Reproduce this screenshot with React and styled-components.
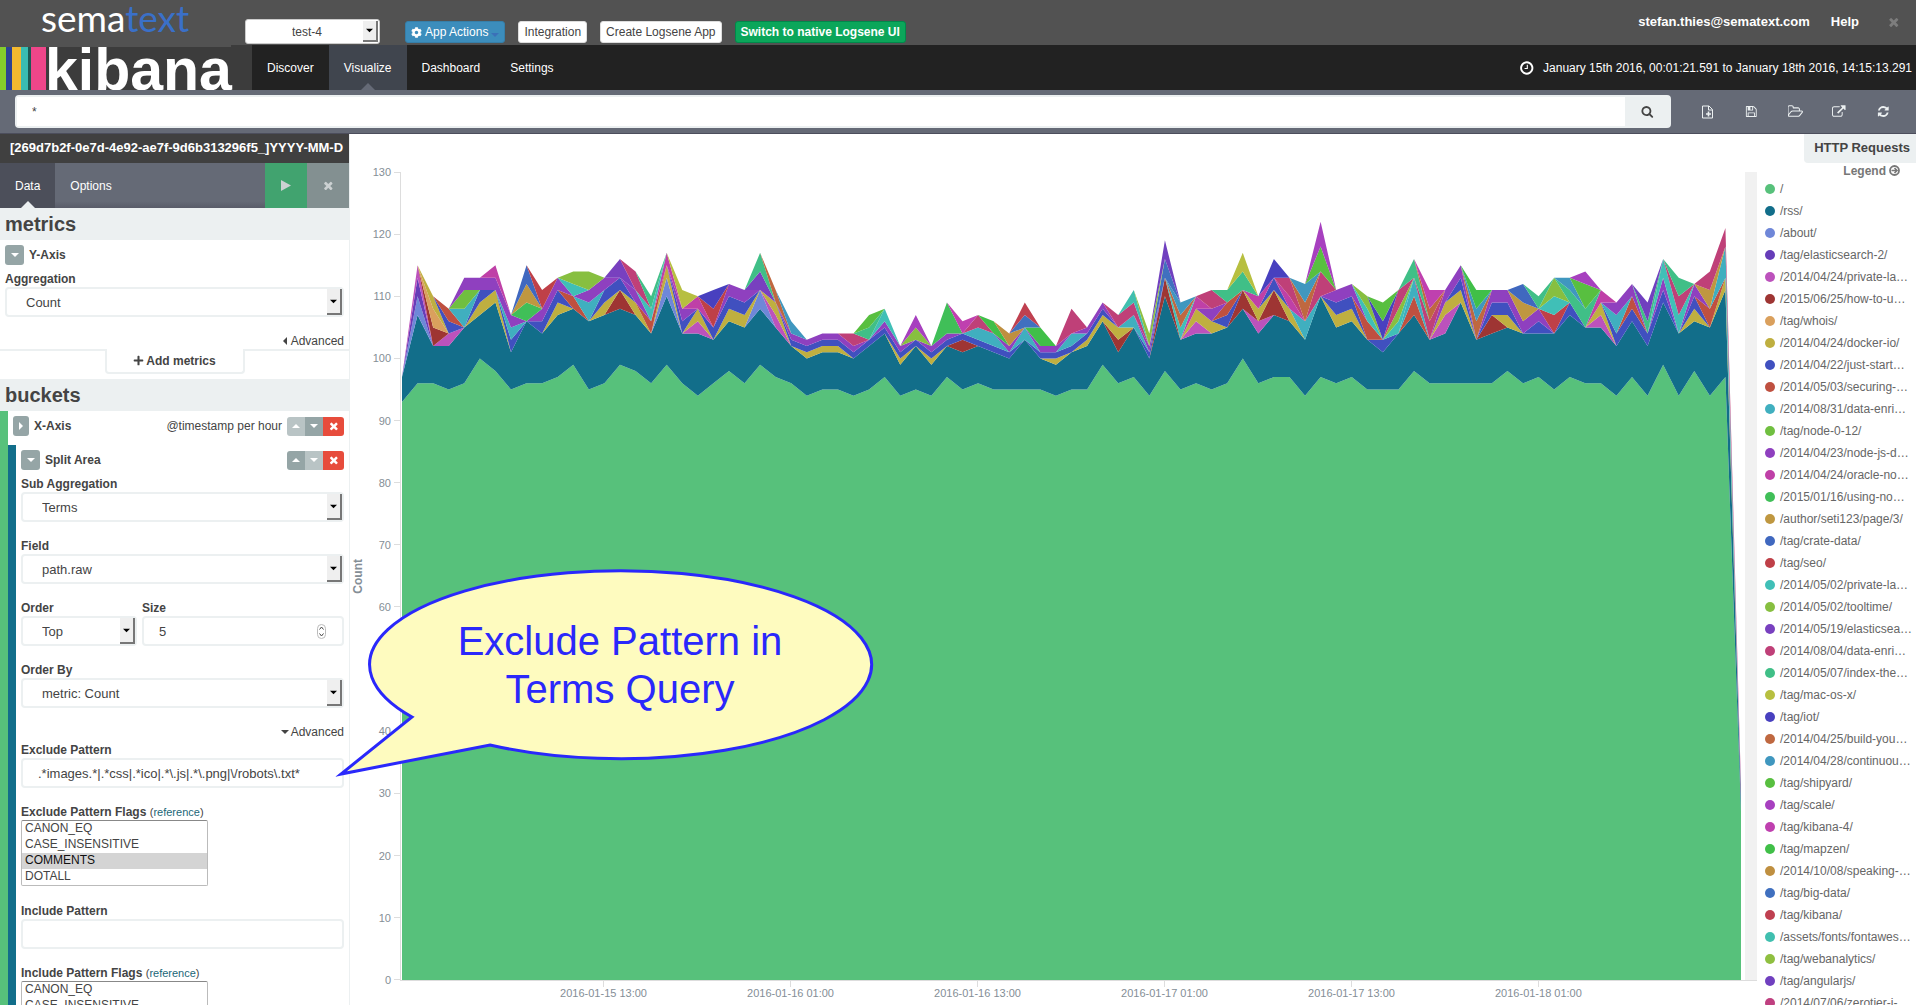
import { useState } from "react";
import styled, { createGlobalStyle } from "styled-components";
import { FaCog, FaPlus } from "react-icons/fa";

const series = [
  ["/", "#57c17b"],
  ["/rss/", "#126e8a"],
  ["/about/", "#6f87d8"],
  ["/tag/elasticsearch-2/", "#663db8"],
  ["/2014/04/24/private-la…", "#bc52bc"],
  ["/2015/06/25/how-to-u…", "#9e3533"],
  ["/tag/whois/", "#daa05d"],
  ["/2014/04/24/docker-io/", "#bfaf40"],
  ["/2014/04/22/just-start…", "#4050bf"],
  ["/2014/05/03/securing-…", "#bf5040"],
  ["/2014/08/31/data-enri…", "#40afbf"],
  ["/tag/node-0-12/", "#70bf40"],
  ["/2014/04/23/node-js-d…", "#8f40bf"],
  ["/2014/04/24/oracle-no…", "#bf40a7"],
  ["/2015/01/16/using-no…", "#40bf58"],
  ["/author/seti123/page/3/", "#bf9740"],
  ["/tag/crate-data/", "#4068bf"],
  ["/tag/seo/", "#bf4048"],
  ["/2014/05/02/private-la…", "#40bfb7"],
  ["/2014/05/02/tooltime/", "#87bf40"],
  ["/2014/05/19/elasticsea…", "#7840bf"],
  ["/2014/08/04/data-enri…", "#bf4078"],
  ["/2014/05/07/index-the…", "#40bf87"],
  ["/tag/mac-os-x/", "#b7bf40"],
  ["/tag/iot/", "#4840bf"],
  ["/2014/04/25/build-you…", "#bf6840"],
  ["/2014/04/28/continuou…", "#4097bf"],
  ["/tag/shipyard/", "#58bf40"],
  ["/tag/scale/", "#a740bf"],
  ["/tag/kibana-4/", "#bf40af"],
  ["/tag/mapzen/", "#40bf48"],
  ["/2014/10/08/speaking-…", "#bf8f40"],
  ["/tag/big-data/", "#4070bf"],
  ["/tag/kibana/", "#bf4050"],
  ["/assets/fonts/fontawes…", "#40bfaf"],
  ["/tag/webanalytics/", "#8fbf40"],
  ["/tag/angularjs/", "#7040bf"],
  ["/2014/07/06/zerotier-i-…", "#bf4080"],
];

// one entry per hour: series index -> number of requests
const hours = [
  { 0: 93, 1: 4 },
  { 0: 96, 1: 11, 2: 3, 3: 3, 4: 2 },
  { 0: 96, 1: 6, 5: 3, 6: 3, 7: 2 },
  { 0: 95, 1: 7, 4: 2, 8: 2, 9: 2 },
  { 0: 96, 1: 9, 10: 3, 11: 3, 12: 2 },
  { 0: 100, 1: 7, 7: 2, 8: 2, 12: 2 },
  { 0: 98, 1: 11, 7: 2, 12: 2, 13: 2 },
  { 0: 95, 1: 6, 8: 2, 10: 2, 12: 2 },
  { 0: 96, 1: 10, 14: 3, 15: 3, 16: 3 },
  { 0: 96, 1: 8, 8: 2, 12: 2, 17: 3 },
  { 0: 97, 1: 10, 7: 2, 8: 2, 12: 2 },
  { 0: 99, 1: 9, 9: 2, 18: 2, 19: 2 },
  { 0: 95, 1: 11, 10: 3, 12: 2, 19: 3 },
  { 0: 96, 1: 11, 7: 2, 8: 2, 12: 2 },
  { 0: 99, 1: 9, 5: 3, 8: 2, 20: 3 },
  { 0: 98, 1: 9, 7: 2, 12: 2, 21: 3 },
  { 0: 96, 1: 8, 9: 2, 18: 2, 22: 2 },
  { 0: 99, 1: 11, 2: 3, 7: 2, 13: 2 },
  { 0: 96, 1: 8, 8: 2, 12: 2, 23: 3 },
  { 0: 94, 1: 10, 4: 2, 7: 2, 13: 2 },
  { 0: 96, 1: 7, 8: 2, 17: 3, 24: 3 },
  { 0: 98, 1: 8, 7: 2, 8: 2, 12: 2 },
  { 0: 96, 1: 9, 7: 2, 8: 2, 12: 2 },
  { 0: 99, 1: 9, 2: 3, 20: 3, 22: 3 },
  { 0: 97, 1: 8, 4: 2, 7: 2, 25: 2 },
  { 0: 96, 1: 6, 8: 1, 12: 1, 26: 2 },
  { 0: 94, 1: 6, 7: 1, 8: 1, 12: 1 },
  { 0: 95, 1: 6, 7: 1, 8: 1, 12: 1 },
  { 0: 95, 1: 6, 7: 1, 8: 1, 12: 1 },
  { 0: 94, 1: 6, 8: 1, 12: 1, 21: 2 },
  { 0: 95, 1: 7, 8: 1, 22: 2, 27: 2 },
  { 0: 97, 1: 7, 8: 1, 12: 1, 18: 2 },
  { 0: 94, 1: 5, 7: 1, 8: 1, 12: 1 },
  { 0: 95, 1: 7, 8: 1, 19: 2, 28: 2 },
  { 0: 94, 1: 5, 7: 1, 8: 1, 12: 1 },
  { 0: 97, 1: 5, 8: 1, 12: 1, 14: 5 },
  { 0: 95, 1: 6, 5: 2, 8: 1, 29: 2 },
  { 0: 96, 1: 6, 8: 1, 10: 2, 21: 2 },
  { 0: 95, 1: 6, 8: 1, 10: 2, 30: 2 },
  { 0: 95, 1: 5, 8: 1, 12: 1, 31: 2 },
  { 0: 95, 1: 8, 10: 2, 32: 2, 33: 2 },
  { 0: 95, 1: 5, 8: 1, 12: 1, 30: 3 },
  { 0: 94, 1: 5, 7: 1, 8: 1, 12: 1 },
  { 0: 95, 1: 6, 8: 1, 10: 2, 21: 4 },
  { 0: 95, 1: 7, 7: 1, 8: 1, 12: 1 },
  { 0: 99, 1: 7, 7: 1, 8: 1, 12: 1 },
  { 0: 96, 1: 5, 5: 2, 7: 2, 21: 2 },
  { 0: 97, 1: 8, 10: 2, 21: 2, 34: 2 },
  { 0: 94, 1: 6, 8: 1, 12: 1, 35: 2 },
  { 0: 98, 1: 12, 5: 3, 32: 3, 36: 3 },
  { 0: 95, 1: 8, 18: 2, 25: 2, 26: 2 },
  { 0: 96, 1: 8, 4: 2, 7: 2, 13: 2 },
  { 0: 95, 1: 9, 7: 2, 12: 2, 21: 3 },
  { 0: 96, 1: 9, 8: 2, 9: 2, 22: 2 },
  { 0: 100, 1: 8, 5: 3, 22: 3, 23: 3 },
  { 0: 96, 1: 8, 4: 2, 7: 2, 13: 2 },
  { 0: 97, 1: 10, 5: 4, 8: 2, 24: 3 },
  { 0: 97, 1: 9, 7: 2, 13: 2, 21: 3 },
  { 0: 94, 1: 9, 10: 3, 25: 3, 26: 3 },
  { 0: 97, 1: 13, 21: 4, 27: 4, 28: 4 },
  { 0: 96, 1: 9, 7: 2, 8: 2, 12: 2 },
  { 0: 97, 1: 9, 7: 2, 8: 2, 12: 2 },
  { 0: 95, 1: 8, 9: 3, 18: 2, 19: 2 },
  { 0: 95, 1: 6, 8: 2, 24: 3, 27: 3 },
  { 0: 95, 1: 9, 18: 2, 19: 2, 21: 3 },
  { 0: 98, 1: 9, 9: 3, 10: 3, 22: 3 },
  { 0: 96, 1: 7, 21: 3, 25: 2, 29: 3 },
  { 0: 96, 1: 8, 4: 3, 7: 2, 12: 2 },
  { 0: 96, 1: 13, 7: 2, 8: 2, 12: 2 },
  { 0: 96, 1: 7, 25: 3, 26: 2, 30: 3 },
  { 0: 96, 1: 8, 5: 3, 8: 2, 12: 2 },
  { 0: 98, 1: 7, 7: 2, 8: 2, 12: 2 },
  { 0: 96, 1: 8, 12: 2, 15: 3, 16: 3 },
  { 0: 97, 1: 7, 8: 2, 12: 2, 22: 2 },
  { 0: 95, 1: 9, 17: 3, 18: 3, 19: 3 },
  { 0: 97, 1: 10, 8: 2, 22: 2, 26: 2 },
  { 0: 96, 1: 9, 22: 3, 27: 4, 28: 2 },
  { 0: 96, 1: 9, 4: 2, 7: 2, 13: 2 },
  { 0: 94, 1: 8, 8: 2, 10: 3, 12: 2 },
  { 0: 97, 1: 9, 8: 2, 9: 2, 12: 2 },
  { 0: 94, 1: 8, 8: 2, 22: 2, 36: 3 },
  { 0: 99, 1: 10, 8: 2, 12: 2, 18: 3 },
  { 0: 94, 1: 10, 18: 3, 21: 3, 22: 3 },
  { 0: 98, 1: 8, 7: 2, 8: 2, 12: 2 },
  { 0: 94, 1: 11, 9: 3, 15: 3, 21: 3 },
  { 0: 97, 1: 14, 7: 2, 10: 5, 21: 3 },
  { 0: 27, 1: 2, 12: 1, 21: 1 },
];

const MAX = 130;
const yTicks = Array.from({ length: 14 }, (_, i) => MAX - i * 10);
const xTicks = [
  "2016-01-15 13:00",
  "2016-01-16 01:00",
  "2016-01-16 13:00",
  "2016-01-17 01:00",
  "2016-01-17 13:00",
  "2016-01-18 01:00",
];
const flags = ["CANON_EQ", "CASE_INSENSITIVE", "COMMENTS", "DOTALL"];

const buildAreas = () => {
  const base = hours.map(() => 0);
  return series.map(([name, color], s) => {
    const lower = base.map((v, x) => `${x},${MAX - v}`);
    hours.forEach((hour, x) => {
      base[x] += hour[s] || 0;
    });
    const upper = base.map((v, x) => `${x},${MAX - v}`);
    return { name, color, points: [...upper, ...lower.reverse()].join(" ") };
  });
};

const areas = buildAreas();

const icons = {
  times:
    "M1490 1322q0 40-28 68l-136 136q-28 28-68 28t-68-28l-294-294-294 294q-28 28-68 28t-68-28l-136-136q-28-28-28-68t28-68l294-294-294-294q-28-28-28-68t28-68l136-136q28-28 68-28t68 28l294 294 294-294q28-28 68-28t68 28l136 136q28 28 28 68t-28 68l-294 294 294 294q28 28 28 68z",
  search:
    "M1216 832q0-185-131.500-316.500t-316.500-131.500-316.500 131.500-131.500 316.500 131.500 316.500 316.500 131.500 316.500-131.500 131.500-316.500zm512 832q0 52-38 90t-90 38q-54 0-90-38l-343-342q-179 124-399 124-143 0-273.500-55.500t-225-150-150-225-55.500-273.500 55.500-273.500 150-225 225-150 273.500-55.500 273.500 55.500 225 150 150 225 55.500 273.500q0 220-124 399l343 343q37 37 37 90z",
  clock:
    "M1024 544v448q0 14-9 23t-23 9h-320q-14 0-23-9t-9-23v-64q0-14 9-23t23-9h224v-352q0-14 9-23t23-9h64q14 0 23 9t9 23zm416 352q0-148-73-273t-198-198-273-73-273 73-198 198-73 273 73 273 198 198 273 73 273-73 198-198 73-273zm224 0q0 209-103 385.500t-279.500 279.500-385.500 103-385.500-103-279.500-279.500-103-385.500 103-385.500 279.500-279.500 385.500-103 385.500 103 279.500 279.500 103 385.500z",
  save: "M512 1536h768v-384h-768v384zm896 0h128v-896q0-14-10-38.500t-20-34.500l-281-281q-10-10-34-20t-39-10v416q0 40-28 68t-68 28h-576q-40 0-68-28t-28-68v-416h-128v1280h128v-416q0-40 28-68t68-28h832q40 0 68 28t28 68v416zm-384-928v-320q0-13-9.500-22.500t-22.500-9.500h-192q-13 0-22.500 9.500t-9.500 22.500v320q0 13 9.500 22.500t22.500 9.500h192q13 0 22.500-9.500t9.500-22.500zm640 32v928q0 40-28 68t-68 28h-1344q-40 0-68-28t-28-68v-1344q0-40 28-68t68-28h928q40 0 88 20t76 48l280 280q28 28 48 76t20 88z",
  open: "M1717 931q0-35-53-35h-1088q-40 0-85.500 21.500t-71.500 52.500l-294 363q-18 24-18 40 0 35 53 35h1088q40 0 86-22t71-53l294-363q18-22 18-39zm-1141-163h768v-160q0-40-28-68t-68-28h-576q-40 0-68-28t-28-68v-64q0-40-28-68t-68-28h-320q-40 0-68 28t-28 68v853l256-315q44-53 116-87.500t140-34.500zm1269 163q0 62-46 120l-295 363q-43 53-116 87.500t-140 34.500h-1088q-92 0-158-66t-66-158v-960q0-92 66-158t158-66h320q92 0 158 66t66 158v32h544q92 0 158 66t66 158v160h192q54 0 99 24.500t67 70.500q15 32 15 68z",
  share:
    "M1408 928v320q0 119-84.500 203.500t-203.500 84.500h-832q-119 0-203.500-84.500t-84.500-203.500v-832q0-119 84.500-203.500t203.500-84.500h704q14 0 23 9t9 23v64q0 14-9 23t-23 9h-704q-66 0-113 47t-47 113v832q0 66 47 113t113 47h832q66 0 113-47t47-113v-320q0-14 9-23t23-9h64q14 0 23 9t9 23zm384-864v512q0 26-19 45t-45 19-45-19l-176-176-652 652q-10 10-23 10t-23-10l-114-114q-10-10-10-23t10-23l652-652-176-176q-19-19-19-45t19-45 45-19h512q26 0 45 19t19 45z",
  refresh:
    "M1639 1056q0 5-1 7-64 268-268 434.500t-478 166.500q-146 0-282.500-55t-243.500-157l-129 129q-19 19-45 19t-45-19-19-45v-448q0-26 19-45t45-19h448q26 0 45 19t19 45-19 45l-137 137q71 66 161 102t187 36q134 0 250-65t186-179q11-17 53-117 8-23 30-23h192q13 0 22.500 9.500t9.500 22.500zm25-800v448q0 26-19 45t-45 19h-448q-26 0-45-19t-19-45 19-45l138-138q-148-137-349-137-134 0-250 65t-186 179q-11 17-53 117-8 23-30 23h-199q-13 0-22.500-9.500t-9.500-22.500v-7q65-268 270-434.500t480-166.500q146 0 284 55.500t245 156.500l130-129q19-19 45-19t45 19 19 45z",
};

const Icon = ({ name, size = 14 }) => (
  <svg width={size} height={size} viewBox="0 0 1850 1792" fill="currentColor">
    <path d={icons[name]} />
  </svg>
);

const FilePlus = () => (
  <svg width="13" height="14" viewBox="0 0 13 14" fill="none" stroke="currentColor">
    <path d="M11.500 5V4.500L8 1H1.500v12h10V5M7.500 1v4h4" strokeWidth="1" />
    <path d="M7.500 6.500v5M5 9h5" strokeWidth="1.600" />
  </svg>
);

const ArrowCircle = () => (
  <svg width="11" height="11" viewBox="0 0 11 11" fill="none" stroke="currentColor">
    <circle cx="5.500" cy="5.500" r="4.500" strokeWidth="1.800" />
    <path d="M2.500 5.500h5M5.500 3l2.500 2.500L5.500 8" strokeWidth="1.600" />
  </svg>
);

const rotations = { down: 0, up: 180, right: 270, left: 90 };

const Caret = ({ dir = "down", size = 8 }) => (
  <svg width={size} height={size} viewBox="0 0 8 8" fill="currentColor">
    <path d="M0 2h8L4 6z" transform={`rotate(${rotations[dir]} 4 4)`} />
  </svg>
);

const KibanaLogo = () => (
  <svg width="252" height="45" viewBox="0 0 252 45" role="img" aria-label="kibana">
    <rect width="231" height="2" fill="#525252" />
    <rect y="2" width="6" height="43" fill="#85cc2c" />
    <rect x="6" y="2" width="6" height="43" fill="#2d4293" />
    <rect x="12" y="2" width="9" height="43" fill="#f3b92f" />
    <rect x="21" y="2" width="7" height="43" fill="#39bdb1" />
    <rect x="28" y="2" width="3" height="43" fill="#1c5b56" />
    <rect x="31" y="2" width="15" height="43" fill="#ee4689" />
    <svg y="2" width="252" height="43">
      <text x="45" y="43" fill="#fff" fontSize="59" fontWeight="bold">
        kibana
      </text>
    </svg>
  </svg>
);

const SelectField = ({ id, label, value }) => (
  <Field>
    <label htmlFor={id}>{label}</label>
    <Stack>
      <Select id={id} defaultValue={value}>
        <option>{value}</option>
      </Select>
      <SelectArrow>
        <Caret size={7} />
      </SelectArrow>
    </Stack>
  </Field>
);

const FlagsField = ({ id, label, selected }) => (
  <Field $last>
    <FieldHead>
      <label htmlFor={id}>{label}</label> <small>(<a href="#reference">reference</a>)</small>
    </FieldHead>
    <ListBox id={id} multiple size={4} defaultValue={selected}>
      {flags.map((flag) => (
        <option key={flag}>{flag}</option>
      ))}
    </ListBox>
  </Field>
);

const RowActions = ({ upOff, downOff }) => (
  <ButtonGroup>
    <MiniButton $faded={upOff} aria-label="Move up">
      <Caret dir="up" />
    </MiniButton>
    <MiniButton $faded={downOff} aria-label="Move down">
      <Caret />
    </MiniButton>
    <MiniButton $danger aria-label="Remove">
      <Icon name="times" size={12} />
    </MiniButton>
  </ButtonGroup>
);

const Header = () => (
  <TopBar>
    <Brand href="#home">
      sema<span>text</span>
    </Brand>
    <TopActions>
      <AppSelect>
        <select aria-label="App" defaultValue="test-4">
          <option>test-4</option>
        </select>
        <SelectArrow>
          <Caret size={7} />
        </SelectArrow>
      </AppSelect>
      <TopButton $kind="primary">
        <FaCog size={11} /> App Actions <i />
      </TopButton>
      <TopButton>Integration</TopButton>
      <TopButton>Create Logsene App</TopButton>
      <TopButton $kind="success">Switch to native Logsene UI</TopButton>
    </TopActions>
    <Account>
      <a href="#account">stefan.thies@sematext.com</a>
      <a href="#help">Help</a>
      <CloseButton aria-label="Close">
        <Icon name="times" size={14} />
      </CloseButton>
    </Account>
  </TopBar>
);

const NavBar = () => (
  <Nav>
    <LogoBox>
      <KibanaLogo />
    </LogoBox>
    {["Discover", "Visualize", "Dashboard", "Settings"].map((item) => (
      <NavLink key={item} href={`#${item}`} $active={item === "Visualize"}>
        {item}
      </NavLink>
    ))}
    <TimePicker>
      <Icon name="clock" size={16} />
      January 15th 2016, 00:01:21.591 to January 18th 2016, 14:15:13.291
    </TimePicker>
  </Nav>
);

const SearchBar = () => (
  <QueryBar>
    <QueryForm>
      <input type="text" aria-label="Query" defaultValue="*" />
      <button type="button" aria-label="Search">
        <Icon name="search" size={13} />
      </button>
    </QueryForm>
    <ToolButton aria-label="New visualization">
      <FilePlus />
    </ToolButton>
    <ToolButton aria-label="Save">
      <Icon name="save" size={13} />
    </ToolButton>
    <ToolButton aria-label="Open">
      <Icon name="open" size={15} />
    </ToolButton>
    <ToolButton aria-label="Share">
      <Icon name="share" size={14} />
    </ToolButton>
    <ToolButton aria-label="Refresh">
      <Icon name="refresh" size={13} />
    </ToolButton>
  </QueryBar>
);

const Editor = () => {
  const [pattern, setPattern] = useState(".*images.*|.*css|.*ico|.*\\.js|.*\\.png|\\/robots\\.txt*");

  return (
    <Sidebar>
      <IndexTitle>[269d7b2f-0e7d-4e92-ae7f-9d6b313296f5_]YYYY-MM-D</IndexTitle>
      <Tabs>
        <Tab $active>Data</Tab>
        <Tab>Options</Tab>
        <TabAction $color="#41a36f" aria-label="Apply changes">
          <svg width="10" height="11" viewBox="0 0 10 11" fill="currentColor">
            <path d="M0 0l10 5.500L0 11z" />
          </svg>
        </TabAction>
        <TabAction $color="#839091" aria-label="Discard changes">
          <Icon name="times" size={13} />
        </TabAction>
      </Tabs>

      <SectionTitle>metrics</SectionTitle>
      <Metrics>
        <AggRow>
          <Toggle aria-label="Toggle Y-Axis">
            <Caret />
          </Toggle>
          <strong>Y-Axis</strong>
        </AggRow>
        <SelectField id="metric" label="Aggregation" value="Count" />
        <Advanced>
          <Caret dir="left" size={8} /> Advanced
        </Advanced>
      </Metrics>
      <AddRow>
        <AddButton>
          <FaPlus size={11} /> Add metrics
        </AddButton>
      </AddRow>

      <SectionTitle>buckets</SectionTitle>
      <Buckets>
        <BucketHead>
          <Toggle $narrow aria-label="Toggle X-Axis">
            <Caret dir="right" />
          </Toggle>
          <strong>X-Axis</strong>
          <span>@timestamp per hour</span>
          <RowActions upOff />
        </BucketHead>
        <SubBucket>
          <AggRow>
            <Toggle aria-label="Toggle Split Area">
              <Caret />
            </Toggle>
            <strong>Split Area</strong>
            <RowActions downOff />
          </AggRow>
          <SelectField id="subAgg" label="Sub Aggregation" value="Terms" />
          <SelectField id="field" label="Field" value="path.raw" />
          <Split>
            <SelectField id="order" label="Order" value="Top" />
            <Field>
              <label htmlFor="size">Size</label>
              <Stack>
                <TextInput id="size" type="number" defaultValue="5" />
                <Spinner width="9" height="15" viewBox="0 0 9 15">
                  <rect x="0.500" y="0.500" width="8" height="14" rx="4" fill="#fff" stroke="#bbb" />
                  <path d="M2.500 5.500l2-2.500 2 2.500M2.500 9.500l2 2.500 2-2.500" fill="none" stroke="#444" />
                </Spinner>
              </Stack>
            </Field>
          </Split>
          <SelectField id="orderBy" label="Order By" value="metric: Count" />
          <Advanced>
            <Caret size={8} /> Advanced
          </Advanced>
          <Field>
            <label htmlFor="exclude">Exclude Pattern</label>
            <TextInput
              id="exclude"
              type="text"
              value={pattern}
              onChange={(e) => setPattern(e.target.value)}
            />
          </Field>
          <FlagsField id="excludeFlags" label="Exclude Pattern Flags" selected={["COMMENTS"]} />
          <Field>
            <label htmlFor="include">Include Pattern</label>
            <TextInput id="include" type="text" />
          </Field>
          <FlagsField id="includeFlags" label="Include Pattern Flags" selected={[]} />
        </SubBucket>
      </Buckets>
    </Sidebar>
  );
};

const Chart = () => (
  <ChartGrid>
    <AxisTitle>Count</AxisTitle>
    <YAxis>
      {yTicks.map((tick) => (
        <li key={tick}>{tick}</li>
      ))}
    </YAxis>
    <Plot>
      <svg width="100%" height="100%" viewBox={`0 0 86 ${MAX}`} preserveAspectRatio="none">
        {areas.map((area) => (
          <polygon key={area.name + area.color} points={area.points} fill={area.color} />
        ))}
      </svg>
    </Plot>
    <LegendHandle aria-label="Toggle legend" />
    <XAxis>
      {xTicks.map((tick) => (
        <li key={tick}>{tick}</li>
      ))}
    </XAxis>
  </ChartGrid>
);

const Legend = () => (
  <LegendBox>
    <LegendToggle>
      Legend <ArrowCircle />
    </LegendToggle>
    <ul>
      {series.map(([name, color], i) => (
        <LegendItem key={i} $color={color}>
          {name}
        </LegendItem>
      ))}
    </ul>
  </LegendBox>
);

const Callout = () => (
  <Bubble width="546" height="214" viewBox="332 566 546 214">
    <path
      d="M412 717A251 94 0 1 1 490 745L341 774Z"
      fill="#fefbbf"
      stroke="#2a28fb"
      strokeWidth="3"
      strokeMiterlimit="10"
    />
    <text x="620" y="655">
      Exclude Pattern in
    </text>
    <text x="620" y="703">
      Terms Query
    </text>
  </Bubble>
);

const App = () => {
  return (
    <Page>
      <GlobalStyle />
      <Header />
      <NavBar />
      <SearchBar />
      <Workspace>
        <Editor />
        <Stage>
          <VisTitle>HTTP Requests</VisTitle>
          <StageBody>
            <Chart />
            <Legend />
          </StageBody>
        </Stage>
        <Callout />
      </Workspace>
    </Page>
  );
};

export default App;

const GlobalStyle = createGlobalStyle`
  * {
    box-sizing: border-box;
  }
  body {
    margin: 0;
    background: #fff;
    color: #444;
    font: 12px/16px "Liberation Sans", Arial, sans-serif;
    overflow: hidden;
  }
  button, input, select {
    font: inherit;
    color: inherit;
    margin: 0;
    border: none;
    outline: none;
  }
  button {
    padding: 0;
    background: none;
    cursor: pointer;
  }
  a {
    color: inherit;
    text-decoration: none;
  }
  ul, h1, h2 {
    margin: 0;
    padding: 0;
    list-style: none;
  }
`;

const Page = styled.div`
  display: flex;
  flex-direction: column;
  height: 100vh;
`;

const TopBar = styled.header`
  display: flex;
  flex: none;
  height: 45px;
  padding: 0 15px 0 41px;
  background: #525252;
`;

const Brand = styled.a`
  width: 204px;
  font: 37px/36px Lato, sans-serif;
  color: #fff;

  span {
    color: #3a70c8;
  }
`;

const TopActions = styled.div`
  display: flex;
  align-items: flex-end;
  gap: 13px;
  padding-bottom: 2px;
`;

const Stack = styled.div`
  display: grid;
  align-items: center;

  > * {
    grid-area: 1 / 1;
  }
`;

const AppSelect = styled(Stack)`
  width: 135px;
  margin: 0 12px -1px 0;

  select {
    appearance: none;
    height: 25px;
    padding-left: 46px;
    border: 1px solid #ccc;
    border-radius: 3px;
    background: #fff;
  }
`;

const SelectArrow = styled.span`
  display: grid;
  place-items: center;
  justify-self: end;
  width: 15px;
  height: calc(100% - 4px);
  margin-right: 2px;
  border-right: 2px solid #777;
  border-bottom: 2px solid #777;
  background: #efefef;
  color: #000;
  pointer-events: none;
`;

const kinds = {
  primary: "background: #3c8dbc; border-color: #367fa9; color: #fff;",
  success: "background: #0ba65a; border-color: #00894b; color: #fff; font-weight: bold;",
};

const TopButton = styled.button`
  display: flex;
  align-items: center;
  gap: 3px;
  height: 22px;
  padding: 0 5px;
  border: 1px solid #ddd;
  border-radius: 3px;
  background: #fff;
  white-space: nowrap;
  ${({ $kind }) => kinds[$kind]}

  i {
    margin-top: 6px;
    border: 4px solid transparent;
    border-top-color: #3a70b8;
    border-bottom: none;
  }
`;

const Account = styled.div`
  display: flex;
  align-items: center;
  gap: 21px;
  margin-left: auto;
  padding-bottom: 2px;
  font-size: 13px;
  font-weight: bold;
  color: #fff;
`;

const CloseButton = styled.button`
  display: flex;
  margin-left: 7px;
  color: #7d7d7d;
`;

const Nav = styled.nav`
  display: flex;
  flex: none;
  height: 45px;
  background: #222;
  color: #fff;
`;

const LogoBox = styled.div`
  width: 252px;
  background: #3c3c3c;
`;

const NavLink = styled.a`
  display: flex;
  position: relative;
  align-items: center;
  padding: 0 15px;
  background: ${({ $active }) => ($active ? "#40454e" : "none")};

  &::after {
    content: "";
    display: ${({ $active }) => ($active ? "block" : "none")};
    position: absolute;
    left: calc(50% - 7px);
    bottom: 0;
    border: 7px solid transparent;
    border-top: none;
    border-bottom-color: #656a76;
  }
`;

const TimePicker = styled.button`
  display: flex;
  align-items: center;
  gap: 8px;
  margin-left: auto;
  padding-right: 4px;
  color: #fff;
`;

const QueryBar = styled.div`
  display: flex;
  flex: none;
  height: 44px;
  padding: 5px 11px 5px 15px;
  border-bottom: 1px solid #4c4e5c;
  background: #656a76;
`;

const QueryForm = styled.form`
  display: flex;
  flex: 1;
  margin-right: 14px;
  border: 2px solid #ecf0f1;
  border-radius: 4px;
  background: #ecf0f1;

  input {
    flex: 1;
    padding: 0 15px;
    background: #fff;
  }
  button {
    width: 44px;
  }
  svg {
    display: block;
    margin: 0 auto;
  }
`;

const ToolButton = styled.button`
  display: grid;
  place-items: center;
  width: 44px;
  color: #ecf0f1;
`;

const Workspace = styled.main`
  display: flex;
  position: relative;
  flex: 1;
  min-height: 0;
`;

const Sidebar = styled.aside`
  flex: none;
  width: 350px;
  overflow: hidden;
  border-right: 1px solid #ecf0f1;
`;

const IndexTitle = styled.h1`
  height: 29px;
  padding-left: 10px;
  overflow: hidden;
  background: #404040;
  color: #fff;
  font-size: 13px;
  line-height: 28px;
  white-space: nowrap;
`;

const Tabs = styled.div`
  display: flex;
  height: 45px;
  background: linear-gradient(#656a76 85%, #595c69);
`;

const Tab = styled.button`
  position: relative;
  padding: 0 15px;
  background: ${({ $active }) => ($active ? "#4c4f5a" : "none")};
  color: #fff;

  &::after {
    content: "";
    display: ${({ $active }) => ($active ? "block" : "none")};
    position: absolute;
    left: calc(50% - 7px);
    bottom: 0;
    border: 7px solid transparent;
    border-top: none;
    border-bottom-color: #ecf0f1;
  }
`;

const TabAction = styled.button`
  display: grid;
  place-items: center;
  width: 42px;
  background: ${({ $color }) => $color};
  color: #ccd1d2;

  &:nth-of-type(3) {
    margin-left: auto;
  }
`;

const SectionTitle = styled.h2`
  height: 32px;
  padding-left: 5px;
  background: #ecf0f1;
  font-size: 20px;
  line-height: 32px;
`;

const Metrics = styled.section`
  padding: 5px 5px 0;
`;

const AggRow = styled.div`
  display: flex;
  align-items: center;
  gap: 5px;
  height: 20px;
  margin-bottom: 6px;
`;

const Toggle = styled.button`
  display: grid;
  place-items: center;
  width: ${({ $narrow }) => ($narrow ? 16 : 19)}px;
  height: 20px;
  border-radius: 3px;
  background: #95a5a6;
  color: #fff;
`;

const Field = styled.div`
  display: flex;
  flex-direction: column;
  margin-bottom: ${({ $last }) => ($last ? 17 : 16)}px;

  label {
    font-weight: bold;
  }
`;

const FieldHead = styled.div`
  small {
    font-size: 11px;
  }
  a {
    color: #1b6778;
  }
`;

const Select = styled.select`
  appearance: none;
  width: 100%;
  height: 30px;
  padding: 2px 0 0 19px;
  border: 2px solid #ecf0f1;
  border-radius: 4px;
  background: #fff;
  font-size: 13px;
`;

const TextInput = styled.input`
  width: 100%;
  height: 30px;
  padding: 0 15px;
  border: 2px solid #ecf0f1;
  border-radius: 4px;
  background: #fff;
  font-size: 13px;
  appearance: textfield;
`;

const Spinner = styled.svg`
  justify-self: end;
  margin-right: 18px;
  pointer-events: none;
`;

const Split = styled.div`
  display: grid;
  grid-template-columns: 116px 1fr;
  gap: 5px;
`;

const ListBox = styled.select`
  width: 187px;
  height: 66px;
  padding: 0;
  overflow: hidden;
  border: 1px solid #bbb;
  border-top-color: #888;

  option {
    height: 16px;
    min-height: 16px;
    padding: 0 3px;
    line-height: 16px;
  }
  option:checked {
    background: #d4d4d4;
  }
`;

const Advanced = styled.button`
  display: flex;
  align-items: center;
  gap: 2px;
  height: 16px;
  margin-left: auto;

  & + ${Field} {
    margin-top: 2px;
  }
`;

const AddRow = styled.div`
  display: flex;
  height: 25px;
  margin-bottom: 5px;

  &::before,
  &::after {
    content: "";
    flex: 1;
    border-top: 2px solid #ecf0f1;
  }
`;

const AddButton = styled.button`
  display: flex;
  align-items: center;
  justify-content: center;
  gap: 2px;
  width: 140px;
  border: 2px solid #ecf0f1;
  border-top: none;
  border-radius: 0 0 4px 4px;
  font-weight: bold;
`;

const Buckets = styled.section`
  border-left: 8px solid #57c17b;
`;

const BucketHead = styled.div`
  display: flex;
  align-items: center;
  gap: 5px;
  height: 34px;
  padding: 0 5px 4px;

  span {
    margin-left: auto;
  }
`;

const ButtonGroup = styled.div`
  display: flex;
  margin-left: auto;
  border-radius: 3px;
  overflow: hidden;

  ${BucketHead} & {
    margin-left: 0;
  }
`;

const MiniButton = styled.button`
  display: grid;
  place-items: center;
  width: ${({ $danger }) => ($danger ? 21 : 18)}px;
  height: 19px;
  background: ${({ $danger, $faded }) => ($danger ? "#e74c3c" : $faded ? "#b9c4c5" : "#95a5a6")};
  color: #fff;
`;

const SubBucket = styled.div`
  padding: 5px 5px 0;
  border-left: 8px solid #126e8a;
`;

const Stage = styled.section`
  display: flex;
  flex: 1;
  flex-direction: column;
  min-width: 0;
`;

const VisTitle = styled.h2`
  align-self: flex-end;
  flex: none;
  height: 29px;
  padding: 0 6px 0 10px;
  border-radius: 0 0 0 4px;
  background: #ecf0f1;
  font-size: 13px;
  line-height: 28px;
`;

const StageBody = styled.div`
  display: flex;
  flex: 1;
  min-height: 0;
`;

const ChartGrid = styled.div`
  display: grid;
  flex: 1;
  grid-template-columns: 14px 36px 1fr 16px;
  grid-template-rows: 1fr 25px;
  padding-top: 9px;
  color: #848e96;
  font-size: 11px;
`;

const AxisTitle = styled.div`
  align-self: center;
  writing-mode: vertical-rl;
  rotate: 180deg;
  font-size: 12px;
  font-weight: bold;
`;

const YAxis = styled.ul`
  display: flex;
  flex-direction: column;
  justify-content: space-between;
  margin: -6px 0;

  li {
    display: flex;
    align-items: center;
    justify-content: flex-end;
    gap: 3px;
    height: 12px;
  }
  li::after {
    content: "";
    width: 6px;
    height: 1px;
    background: #ddd;
  }
`;

const Plot = styled.div`
  min-height: 0;
  padding-left: 1px;
  border-left: 1px solid #ddd;

  svg {
    display: block;
  }
`;

const LegendHandle = styled.button`
  margin-left: 4px;
  background: #f1f1f1;
  cursor: col-resize;
`;

const XAxis = styled.ul`
  display: grid;
  grid-column: 3 / 5;
  grid-template-columns: 7fr repeat(6, 12fr) 7fr;
  padding: 0 16px 0 1px;
  border-top: 1px solid #ddd;

  li {
    display: flex;
    flex-direction: column;
    align-items: center;
    line-height: 12px;
  }
  li:first-child {
    grid-column-start: 2;
  }
  li::before {
    content: "";
    width: 1px;
    height: 6px;
    background: #ddd;
  }
`;

const LegendBox = styled.aside`
  flex: none;
  width: 159px;
  overflow: hidden;
  color: #666;
`;

const LegendToggle = styled.button`
  display: flex;
  align-items: center;
  gap: 3px;
  height: 15px;
  margin: 0 16px 0 auto;
  color: #777;
  font-weight: bold;
`;

const LegendItem = styled.li`
  display: flex;
  align-items: center;
  gap: 5px;
  height: 22px;
  padding-left: 8px;
  white-space: nowrap;

  &::before {
    content: "";
    width: 10px;
    height: 10px;
    border-radius: 50%;
    background: ${({ $color }) => $color};
  }
`;

const Bubble = styled.svg`
  position: absolute;
  left: 332px;
  top: 432px;
  pointer-events: none;

  text {
    fill: #2a28fb;
    font-size: 40px;
    text-anchor: middle;
  }
`;
